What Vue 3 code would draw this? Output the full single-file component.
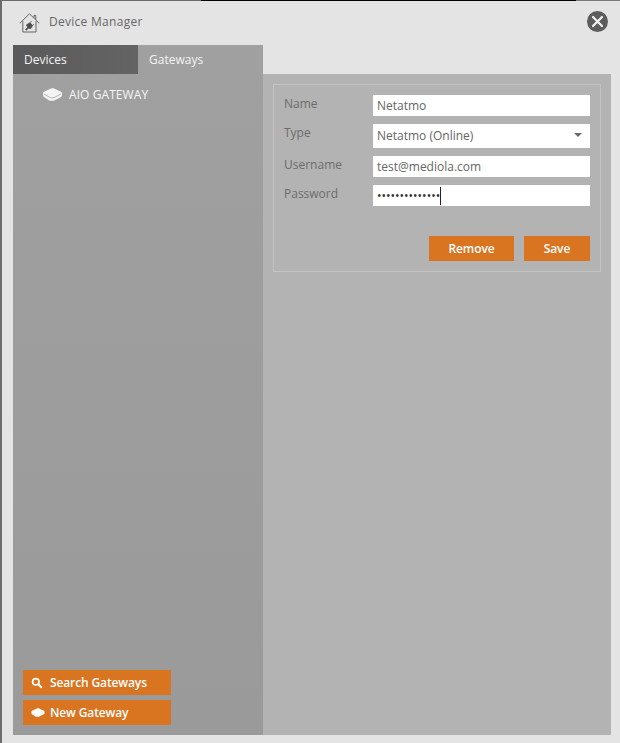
<script setup>
const fields = [
  { label: 'Name', value: 'Netatmo', cls: 'f-name' },
  { label: 'Type', value: 'Netatmo (Online)', cls: 'f-type', select: true },
  { label: 'Username', value: 'test@mediola.com', cls: 'f-user' },
  { label: 'Password', value: '••••••••••••••', cls: 'f-pass', caret: true },
]
</script>

<template>
  <div class="window">
    <div class="topline"><span class="tl-a"></span><span class="tl-b"></span><span class="tl-c"></span></div>
    <div class="shell">
      <header class="header">
        <svg class="home" width="21" height="20" viewBox="0 0 21 20">
          <path d="M0.8 10.2 L10.5 0.8 L20.2 10.2 M15 4.8 V2.4 H16.8 V7 M3.8 8.2 V19 H17 V8.2" fill="none" stroke="#666" stroke-width="1"/>
          <path d="M6.6 16.6 L8.6 14.6 L7.6 11.8 L11 9.8 L13.6 12.6 L11.6 15.6 L9.4 15.2 L7.4 17.2 Z M11 9.8 L12.6 8.2 M13.6 12.6 L15 11.2" fill="#4f4f4f" stroke="#4f4f4f" stroke-width="0.9"/>
        </svg>
        <span class="title">Device Manager</span>
        <svg class="close" width="21" height="21" viewBox="0 0 21 21">
          <circle cx="10.5" cy="10.5" r="10.5" fill="#5c5c5c"/>
          <path d="M6 6 L15 15 M15 6 L6 15" stroke="#f2f2f2" stroke-width="2.2" stroke-linecap="round"/>
        </svg>
      </header>
      <div class="body">
        <aside class="side">
          <div class="tabs">
            <div class="tab active-dark">Devices</div>
            <div class="tab">Gateways</div>
          </div>
          <div class="list">
            <div class="gw">
              <svg width="19" height="13" viewBox="0 0 19 13">
                <path d="M8 0.6 C8.8 0.2 10.2 0.2 11 0.6 L18 3.8 C18.8 4.2 19 4.8 19 5.4 V7.6 C19 8.2 18.6 8.6 18 9 L11.4 12.4 C10.8 12.8 10.2 12.8 9.4 12.8 H7.6 C7 12.8 6.4 12.6 5.8 12.2 L1 9 C0.4 8.6 0 8.2 0 7.6 V5.4 C0 4.8 0.2 4.2 1 3.8 Z" fill="#f4f4f4"/>
                <path d="M1 6 L6.4 9.2 C7 9.6 7.6 9.8 8.4 9.8 H10 C10.6 9.8 11.2 9.6 11.8 9.2 L18 6" fill="none" stroke="#a2a2a2" stroke-width="0.8"/>
              </svg>
              <span>AIO GATEWAY</span>
            </div>
          </div>
          <div class="actions">
            <button class="btn wide">
              <svg width="12" height="12" viewBox="0 0 12 12">
                <circle cx="4.8" cy="4.8" r="3.2" fill="none" stroke="#fff" stroke-width="1.7"/>
                <path d="M7.2 7.2 L10.8 10.8" stroke="#fff" stroke-width="2.1"/>
              </svg>
              <span>Search Gateways</span>
            </button>
            <button class="btn wide">
              <svg width="14" height="9" viewBox="0 0 19 13">
                <path d="M8 0.6 C8.8 0.2 10.2 0.2 11 0.6 L18 3.8 C18.8 4.2 19 4.8 19 5.4 V7.6 C19 8.2 18.6 8.6 18 9 L11.4 12.4 C10.8 12.8 10.2 12.8 9.4 12.8 H7.6 C7 12.8 6.4 12.6 5.8 12.2 L1 9 C0.4 8.6 0 8.2 0 7.6 V5.4 C0 4.8 0.2 4.2 1 3.8 Z" fill="#fff"/>
              </svg>
              <span>New Gateway</span>
            </button>
          </div>
        </aside>
        <main class="content">
          <section class="form">
            <div v-for="f in fields" :key="f.label" class="row" :class="f.cls">
              <label class="label">{{ f.label }}</label>
              <div class="input">
                <span class="val">{{ f.value }}</span>
                <i v-if="f.caret" class="caret"></i>
                <i v-if="f.select" class="arrow"></i>
              </div>
            </div>
            <div class="form-actions">
              <button class="btn remove">Remove</button>
              <button class="btn save">Save</button>
            </div>
          </section>
        </main>
      </div>
    </div>
  </div>
</template>

<style>
html, body { margin: 0; background: #e4e4e4; }
</style>

<style scoped>
.window {
  width: 620px;
  height: 743px;
  background: #e4e4e4;
  font-family: "Open Sans", "Noto Sans", sans-serif;
  overflow: hidden;
  display: flex;
  flex-direction: column;
  box-sizing: border-box;
}
.topline { display: flex; height: 1px; flex: none; }
.tl-a { width: 201px; background: #6b6b6b; }
.tl-b { width: 375px; background: #000; }
.tl-c { flex: 1; background: #7a7a7a; }
.shell {
  flex: 1;
  display: flex;
  flex-direction: column;
  border-left: 2px solid #6b6b6b;
  padding: 0 9px 8px 11px;
  min-height: 0;
}
.header {
  height: 44px;
  flex: none;
  display: flex;
  align-items: center;
  position: relative;
  padding-left: 6px;
  box-sizing: border-box;
}
.title {
  margin-left: 9px;
  font-size: 12px;
  font-weight: 500;
  letter-spacing: 0.28px;
  color: #666;
  position: relative;
  top: -2px;
}
.close { position: absolute; right: 3px; top: 10px; }
.body { flex: 1; display: flex; min-height: 0; }
.side {
  width: 250px;
  flex: none;
  display: flex;
  flex-direction: column;
  background: linear-gradient(180deg, #a0a0a0, #9a9a9a);
  color: #fff;
}
.tabs { display: flex; height: 29px; flex: none; }
.tab {
  width: 125px;
  box-sizing: border-box;
  padding-left: 11px;
  font-size: 12px;
  font-weight: 500;
  line-height: 29px;
  color: #f4f4f4;
}
.active-dark { background: linear-gradient(90deg, #5a5a5a, #646464); }
.list { flex: 1; padding: 12px 0 0 30px; }
.gw {
  display: flex;
  align-items: center;
  gap: 7px;
  font-size: 12px;
  font-weight: 500;
  color: #f6f6f6;
  letter-spacing: 0.08px;
  height: 16px;
}
.actions {
  display: flex;
  flex-direction: column;
  gap: 5px;
  padding: 0 0 10px 10px;
}
.btn {
  border: 0;
  background: #d97421;
  color: #fff;
  font-family: inherit;
  font-size: 12px;
  font-weight: 600;
  letter-spacing: -0.12px;
  padding: 0;
  height: 25px;
}
.wide {
  width: 148px;
  display: flex;
  align-items: center;
  padding-left: 8px;
  box-sizing: border-box;
  position: relative;
}
.wide span { position: absolute; left: 27px; }
.content {
  flex: 1;
  margin-top: 29px;
  background: #b3b3b3;
  padding: 10px;
  min-width: 0;
}
.form {
  height: 188px;
  box-sizing: border-box;
  border: 1px solid #c4c4c4;
  padding: 10px 10px 0 10px;
  display: flex;
  flex-direction: column;
}
.row { display: flex; margin-bottom: 8px; }
.label {
  width: 89px;
  flex: none;
  font-size: 12px;
  color: #6c6c6c;
  line-height: 17px;
}
.input {
  width: 217px;
  height: 21px;
  background: #fff;
  box-sizing: border-box;
  padding-left: 4px;
  font-size: 12px;
  line-height: 21px;
  color: #666;
  position: relative;
  display: flex;
}
.f-type .input { height: 24px; line-height: 24px; }
.f-pass .val { color: #333; }
.caret { display: block; width: 1px; height: 18px; background: #222; margin: 2px 0 0 0; }
.arrow {
  position: absolute;
  right: 8px;
  top: 9px;
  border-left: 4px solid transparent;
  border-right: 4px solid transparent;
  border-top: 4px solid #6a6a6a;
}
.form-actions {
  display: flex;
  justify-content: flex-end;
  gap: 10px;
  margin-top: 22px;
}
.remove { width: 85px; }
.save { width: 66px; }
</style>
